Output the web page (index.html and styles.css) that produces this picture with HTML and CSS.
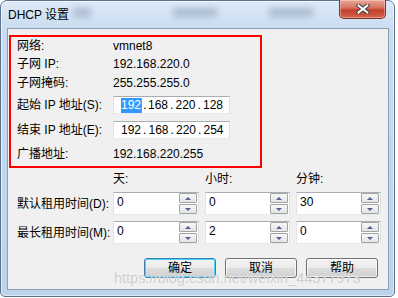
FILE: index.html
```html
<!DOCTYPE html>
<html lang="zh-CN">
<head>
    <meta charset="UTF-8">
    <title>DHCP 设置</title>
    <link rel="stylesheet" href="styles.css">
</head>
<body>
    <div class="window">
        <!-- 标题栏 -->
        <div class="titlebar">
            <span class="title">DHCP 设置</span>
            <span class="glass-blur blur-1"></span>
            <span class="glass-blur blur-2"></span>
            <span class="glass-blur blur-3"></span>
            <button class="close-btn" aria-label="关闭">
                <svg width="14" height="10" viewBox="0 0 14 10">
                    <path d="M2.5 1.5 L11.5 8.5 M11.5 1.5 L2.5 8.5" stroke="#3b3b3b" stroke-width="4" stroke-linecap="square"/>
                    <path d="M2.5 1.5 L11.5 8.5 M11.5 1.5 L2.5 8.5" stroke="#fff" stroke-width="2" stroke-linecap="square"/>
                </svg>
            </button>
        </div>

        <div class="client">
            <!-- 网络信息 -->
            <div class="info-box">
                <div class="info-row">
                    <span class="label">网络:</span>
                    <span class="value">vmnet8</span>
                </div>
                <div class="info-row">
                    <span class="label">子网 IP:</span>
                    <span class="value">192.168.220.0</span>
                </div>
                <div class="info-row">
                    <span class="label">子网掩码:</span>
                    <span class="value">255.255.255.0</span>
                </div>
                <div class="info-row row-start">
                    <span class="label">起始 IP 地址(S):</span>
                    <div class="ip-field">
                        <span class="octet selected">192</span><span class="dot">.</span>
                        <span class="octet">168</span><span class="dot">.</span>
                        <span class="octet">220</span><span class="dot">.</span>
                        <span class="octet">128</span>
                    </div>
                </div>
                <div class="info-row row-end">
                    <span class="label">结束 IP 地址(E):</span>
                    <div class="ip-field">
                        <span class="octet">192</span><span class="dot">.</span>
                        <span class="octet">168</span><span class="dot">.</span>
                        <span class="octet">220</span><span class="dot">.</span>
                        <span class="octet">254</span>
                    </div>
                </div>
                <div class="info-row">
                    <span class="label">广播地址:</span>
                    <span class="value">192.168.220.255</span>
                </div>
            </div>

            <!-- 租用时间 -->
            <div class="lease">
                <span></span>
                <span class="col-head">天:</span>
                <span class="col-head">小时:</span>
                <span class="col-head">分钟:</span>

                <span class="lease-label">默认租用时间(D):</span>
                <div class="spin"><span class="spin-value">0</span><span class="spin-btns"><span class="spin-btn up"></span><span class="spin-btn down"></span></span></div>
                <div class="spin"><span class="spin-value">0</span><span class="spin-btns"><span class="spin-btn up"></span><span class="spin-btn down"></span></span></div>
                <div class="spin"><span class="spin-value">30</span><span class="spin-btns"><span class="spin-btn up"></span><span class="spin-btn down"></span></span></div>

                <span class="lease-label">最长租用时间(M):</span>
                <div class="spin"><span class="spin-value">0</span><span class="spin-btns"><span class="spin-btn up"></span><span class="spin-btn down"></span></span></div>
                <div class="spin"><span class="spin-value">2</span><span class="spin-btns"><span class="spin-btn up"></span><span class="spin-btn down"></span></span></div>
                <div class="spin"><span class="spin-value">0</span><span class="spin-btns"><span class="spin-btn up"></span><span class="spin-btn down"></span></span></div>
            </div>

            <!-- 按钮 -->
            <div class="buttons">
                <button class="btn btn-default">确定</button>
                <button class="btn">取消</button>
                <button class="btn">帮助</button>
            </div>
        </div>

        <div class="watermark">https://blog.csdn.net/weixin_44377973</div>
    </div>
</body>
</html>
```

FILE: styles.css
```css
/* 通用 */
* {
    box-sizing: border-box;
}
body {
    margin: 0;
    background: #fff;
    font-family: "Liberation Sans", "Noto Sans CJK SC", sans-serif;
    font-size: 12px;
    color: #000;
}

/* 窗口框架 */
.window {
    position: relative;
    width: 395px;
    height: 297px;
    border: 1px solid #5d7190;
    border-radius: 7px 7px 5px 5px;
    background: linear-gradient(#dce9f7, #c9dcf0 30px, #bdd3ea);
    box-shadow: inset 0 0 0 1px rgba(255, 255, 255, 0.55);
    padding: 0 5px 6px 6px;
    display: flex;
    flex-direction: column;
}
.titlebar {
    position: relative;
    height: 27px;
    display: flex;
    align-items: center;
}
.title {
    padding-left: 1px;
    font-size: 12px;
    line-height: 14px;
}
.glass-blur {
    position: absolute;
    top: 7px;
    height: 9px;
    background: rgba(70, 90, 120, 0.28);
    filter: blur(3px);
}
.blur-1 { left: 66px; width: 18px; }
.blur-2 { left: 166px; width: 44px; }
.blur-3 { left: 262px; width: 44px; }

.close-btn {
    position: absolute;
    top: -1px;
    right: 3px;
    width: 47px;
    height: 19px;
    padding: 0;
    border: 1px solid #7a3328;
    border-top: none;
    border-radius: 0 0 5px 5px;
    background: linear-gradient(#e9a898, #d4705d 45%, #c2412a 55%, #d3624b);
    box-shadow: inset 0 0 0 1px rgba(255, 220, 210, 0.45);
    display: flex;
    align-items: center;
    justify-content: center;
}

/* 客户区 */
.client {
    flex: 1;
    border: 1px solid #8b9cb3;
    background: #f0f0f0;
    padding: 6px 0 0 1px;
    display: flex;
    flex-direction: column;
}

/* 红框信息区 */
.info-box {
    width: 253px;
    border: 2px solid #ff0000;
    padding-left: 6px;
    display: flex;
    flex-direction: column;
}
.info-row {
    display: flex;
    align-items: center;
    height: 19px;
    line-height: 14px;
}
.info-row:first-child {
    height: 17px;
}
.info-row.row-start {
    height: 26px;
}
.info-row.row-end {
    height: 24px;
}
.info-row:last-child {
    height: 24px;
}
.label {
    flex: none;
    width: 96px;
    white-space: nowrap;
}
.ip-field {
    width: 117px;
    height: 18px;
    border: 1px solid;
    border-color: #abadb3 #dbdfe6 #e3e9ef #e2e3ea;
    background: #fff;
    padding-left: 7px;
    display: flex;
    align-items: center;
}
.octet {
    width: 20px;
    line-height: 15px;
}
.octet.selected {
    width: 21px;
    background: #3399ff;
    color: #fff;
    border-right: 1px solid #d9822b;
}
.dot {
    width: 7.5px;
    text-align: center;
}
.octet.selected + .dot {
    width: 6px;
}

/* 租用时间 */
.lease {
    margin-top: 4px;
    padding-left: 8px;
    display: grid;
    grid-template-columns: 90px 86px 85px 85px;
    grid-template-rows: 14px 23px 23px;
    column-gap: 6px;
    row-gap: 6px;
}
.col-head {
    line-height: 14px;
}
.lease-label {
    align-self: center;
    white-space: nowrap;
    line-height: 14px;
}
.spin {
    display: flex;
    border: 1px solid;
    border-color: #abadb3 #dbdfe6 #e3e9ef #e2e3ea;
    background: #fff;
}
.spin-value {
    flex: 1;
    padding: 2px 0 0 3px;
    line-height: 14px;
}
.spin-btns {
    width: 19px;
    padding: 0 1px 0 0;
    display: flex;
    flex-direction: column;
    gap: 1px;
}
.spin-btn {
    flex: 1;
    border: 1px solid #a3a3a3;
    border-radius: 1px;
    background: linear-gradient(#f7f7f7, #e4e4e4);
    display: flex;
    align-items: center;
    justify-content: center;
}
.spin-btn::after {
    content: "";
    border-left: 3.5px solid transparent;
    border-right: 3.5px solid transparent;
}
.spin-btn.up::after {
    border-bottom: 3px solid #4f6388;
}
.spin-btn.down::after {
    border-top: 3px solid #4f6388;
}

/* 按钮 */
.buttons {
    margin-top: 14px;
    padding-right: 10px;
    display: flex;
    justify-content: flex-end;
    gap: 9px;
}
.btn {
    width: 72px;
    height: 20px;
    padding: 0;
    border: 1px solid #707070;
    border-radius: 3px;
    background: linear-gradient(#f2f2f2, #ebebeb 50%, #dddddd 51%, #cfcfcf);
    box-shadow: inset 0 0 0 1px rgba(255, 255, 255, 0.7);
    font-family: "Liberation Sans", "Noto Sans CJK SC", sans-serif;
    font-size: 12px;
    line-height: 14px;
    color: #000;
}
.btn-default {
    border-color: #3c7fb1;
    box-shadow: inset 0 0 0 1px #48d7fb;
}

/* 水印 */
.watermark {
    position: absolute;
    left: 113px;
    top: 269px;
    font-size: 14.5px;
    line-height: 17px;
    color: rgba(196, 196, 196, 0.85);
    text-shadow: 0 0 1px #fff;
    white-space: nowrap;
}
```
